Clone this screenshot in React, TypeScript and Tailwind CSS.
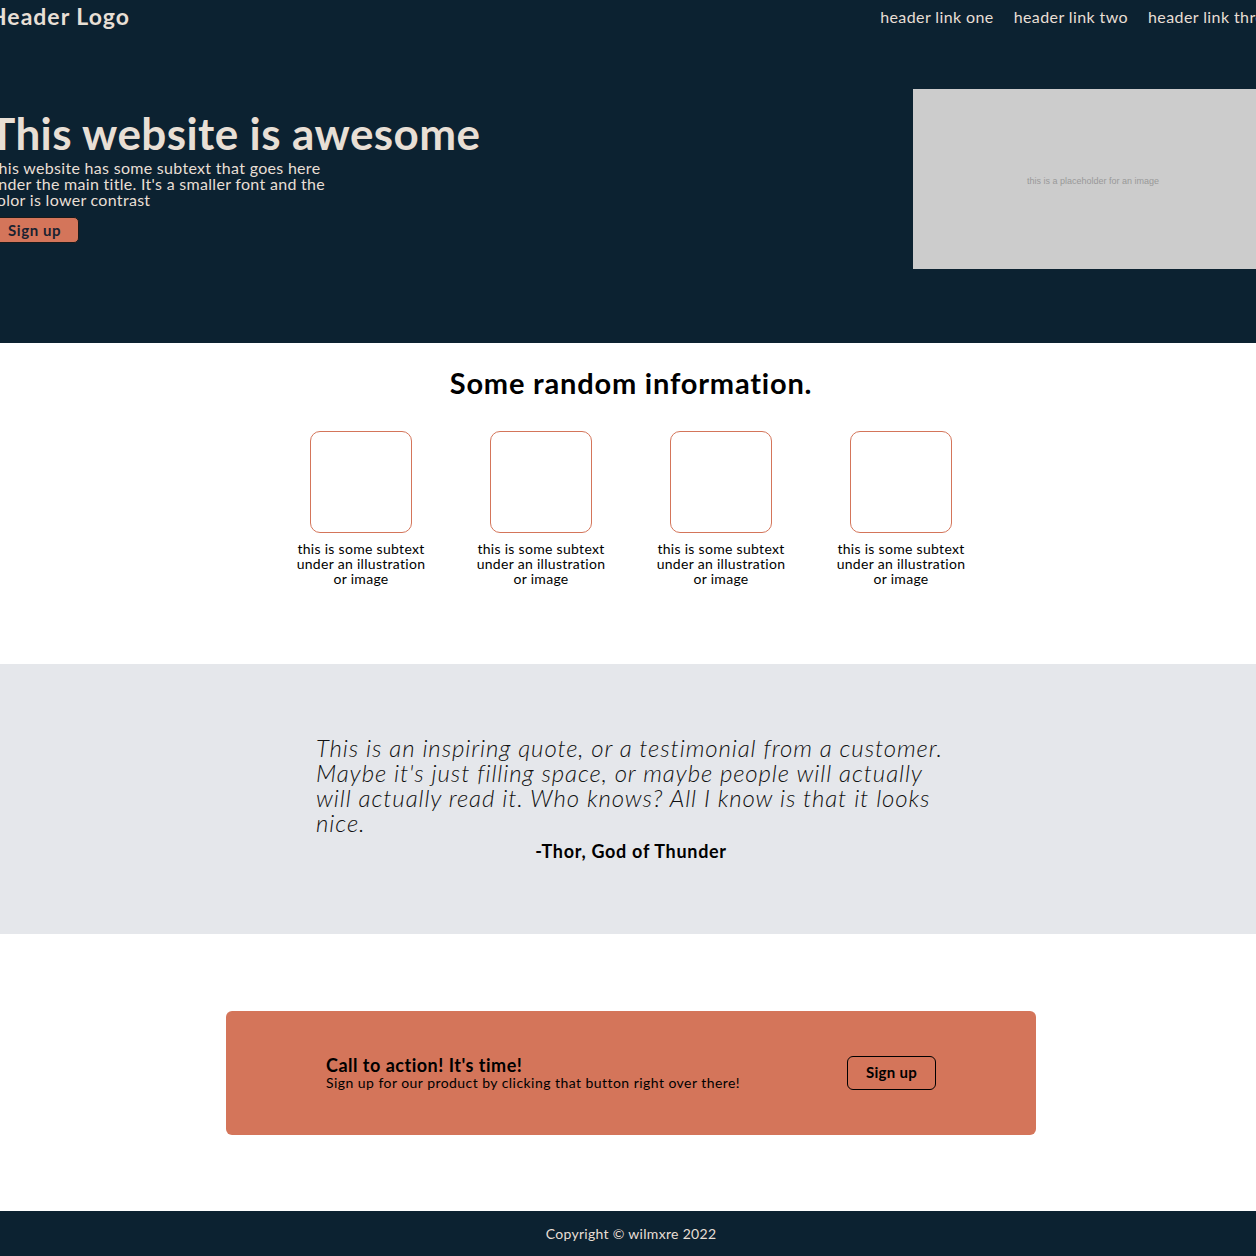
const font = { fontFamily: 'Lato, "Noto Sans", sans-serif' };

const features = [1, 2, 3, 4];

const App = () => {
  return (
    <div className="w-[1262px] min-h-screen bg-white overflow-hidden" style={font}>
      <div className="bg-[#0c2231]">
        <div className="flex justify-center">
          <div className="w-[1284px] shrink-0 flex justify-between items-center h-[33px]">
            <div className="text-[23px] font-bold tracking-[1px] text-[#e8dfd5]">Header Logo</div>
            <ul className="flex gap-5 text-[16px] tracking-[0.4px] text-[#e8dfd5]">
              <li>header link one</li>
              <li>header link two</li>
              <li>header link three</li>
            </ul>
          </div>
        </div>
        <div className="flex justify-center">
          <div className="w-[1284px] shrink-0 flex justify-between items-start pt-[56px] pb-[74px]">
            <div className="flex flex-col items-start pt-[20px]">
              <h1 className="text-[44px] leading-[48px] font-bold tracking-[0.4px] text-[#e8dfd5]">This website is awesome</h1>
              <p className="mt-[3px] max-w-[345px] text-[16px] leading-[16px] tracking-[0.3px] text-[#e8dfd5]">
                This website has some subtext that goes here under the main title. It's a smaller font and the color is lower contrast
              </p>
              <button className="mt-[9px] h-[26px] pl-[18px] pr-[17px] rounded-[5px] border border-[#1a1a1a] bg-[#d4755a] text-[15px] font-bold tracking-[0.6px] text-[#1a2230]">
                Sign up
              </button>
            </div>
            <div className="w-[360px] h-[180px] bg-[#cccccc] flex items-center justify-center">
              <span className="mt-[6px] text-[9px] text-[#999999]" style={{ fontFamily: '"Liberation Sans", sans-serif' }}>
                this is a placeholder for an image
              </span>
            </div>
          </div>
        </div>
      </div>

      <section className="pt-[22px] pb-[78px] flex flex-col items-center">
        <h2 className="text-[29px] leading-[36px] font-bold tracking-[0.8px] text-black">Some random information.</h2>
        <div className="mt-[30px] flex gap-[50px]">
          {features.map((n) => (
            <div key={n} className="w-[130px] flex flex-col items-center">
              <div className="w-[102px] h-[102px] rounded-[10px] border border-[#d4755a]"></div>
              <p className="mt-[8px] text-center text-[14px] leading-[15px] tracking-[0.3px] text-black">
                this is some subtext under an illustration or image
              </p>
            </div>
          ))}
        </div>
      </section>

      <section className="bg-[#e5e7eb] h-[270px] flex flex-col items-center justify-center">
        <div className="w-[630px] pt-[2px]">
          <p className="text-[24px] leading-[25px] italic font-light tracking-[0.9px] text-[#111]">
            This is an inspiring quote, or a testimonial from a customer. Maybe it's just filling space, or maybe people will actually will actually read it. Who knows? All I know is that it looks nice.
          </p>
          <p className="mt-[3px] text-center text-[18px] font-bold tracking-[0.7px] text-black">-Thor, God of Thunder</p>
        </div>
      </section>

      <section className="h-[277px] flex items-center justify-center">
        <div className="w-[810px] h-[124px] rounded-[6px] bg-[#d4755a] flex items-center justify-between pl-[100px] pr-[100px]">
          <div className="text-black">
            <h3 className="text-[18px] leading-[20px] font-bold tracking-[0.5px]">Call to action! It's time!</h3>
            <p className="text-[14px] leading-[16px] tracking-[0.45px]">Sign up for our product by clicking that button right over there!</p>
          </div>
          <button className="w-[89px] h-[34px] rounded-[6px] border border-black text-[15px] font-bold tracking-[0.3px] text-black">
            Sign up
          </button>
        </div>
      </section>

      <footer className="bg-[#0c2231] h-[45px] flex items-center justify-center">
        <p className="text-[14px] tracking-[0.3px] text-[#e8dfd5]">Copyright © wilmxre 2022</p>
      </footer>
    </div>
  );
};

export default App;
